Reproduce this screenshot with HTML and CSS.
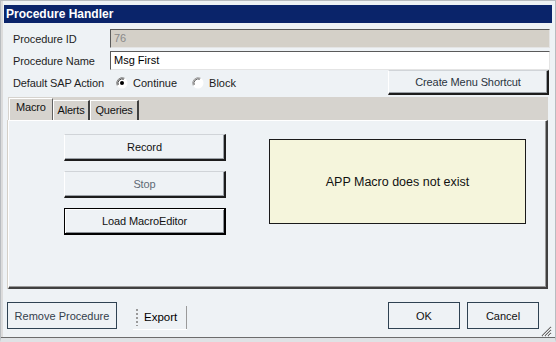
FILE: index.html
```html
<!DOCTYPE html>
<html>
<head>
<meta charset="utf-8">
<link rel="stylesheet" href="styles.css">
</head>
<body>
<div class="window">
  <div class="titlebar">Procedure Handler</div>
  <div class="form">
    <span class="lbl">Procedure ID</span>
    <div class="input disabled">76</div>
    <span class="lbl">Procedure Name</span>
    <div class="input">Msg First</div>
  </div>
  <div class="action-row">
    <span class="lbl action-lbl">Default SAP Action</span>
    <span class="radio-item">
      <svg class="radio" width="12" height="12" viewBox="0 0 12 12"><circle cx="6" cy="6" r="5.5" fill="#fff"/><path d="M1.2 8.5 A5.5 5.5 0 0 1 8.5 1.2" fill="none" stroke="#7a7a7a" stroke-width="1"/><path d="M2.2 7.8 A4.3 4.3 0 0 1 7.8 2.2" fill="none" stroke="#303030" stroke-width="1"/><circle cx="6" cy="6" r="2" fill="#000"/></svg>
      <span>Continue</span>
    </span>
    <span class="radio-item">
      <svg class="radio" width="12" height="12" viewBox="0 0 12 12"><circle cx="6" cy="6" r="5.5" fill="#fff"/><path d="M1.2 8.5 A5.5 5.5 0 0 1 8.5 1.2" fill="none" stroke="#9a9a9a" stroke-width="1"/><path d="M2.2 7.8 A4.3 4.3 0 0 1 7.8 2.2" fill="none" stroke="#505050" stroke-width="1"/></svg>
      <span>Block</span>
    </span>
    <button class="btn3d shortcut">Create Menu Shortcut</button>
  </div>
  <div class="tabs">
    <div class="tabstrip">
      <div class="tab active">Macro</div>
      <div class="tab">Alerts</div>
      <div class="tab">Queries</div>
    </div>
    <div class="tabpanel">
      <div class="btncol">
        <button class="btn3d">Record</button>
        <button class="btn3d disabled">Stop</button>
        <button class="btn3d default">Load MacroEditor</button>
      </div>
      <div class="notice">APP Macro does not exist</div>
    </div>
  </div>
  <div class="footer">
    <button class="flat remove">Remove Procedure</button>
    <div class="toolbar"><span class="grip"></span><span class="export">Export</span></div>
    <span class="spacer"></span>
    <button class="flat ok">OK</button>
    <button class="flat cancel">Cancel</button>
  </div>
  <svg class="sizegrip" width="11" height="11" viewBox="0 0 11 11">
    <path d="M10 1 L1 10 M10 4 L4 10 M10 7 L7 10" stroke="#6a6a6a" stroke-width="1.2"/>
    <path d="M10 2 L2 10 M10 5 L5 10 M10 8 L8 10" stroke="#ffffff" stroke-width="0.8"/>
  </svg>
</div>
</body>
</html>
```
FILE: styles.css
```css
* { box-sizing: border-box; }
html, body { margin: 0; padding: 0; background: #eef2f5; }
body {
  font-family: "Liberation Sans", Arial, sans-serif;
  font-size: 11px;
  color: #1a1a1a;
}
.window {
  position: relative;
  width: 556px;
  height: 342px;
  background: #eef2f5;
  border: 1px solid #b8bcc0;
  border-bottom: 4px solid #dfe2e5;
  box-shadow: inset 0 -1px #6c6c6c, inset 2px 0 #dcdcdc;
  display: flex;
  flex-direction: column;
}
.titlebar {
  margin: 4px 3px 0 3px;
  height: 18px;
  background: #0a246a;
  color: #fff;
  font-weight: bold;
  font-size: 12px;
  line-height: 18px;
  padding-left: 2px;
}
.form {
  margin-top: 6px;
  padding: 0 5px 0 12px;
  display: grid;
  grid-template-columns: 97px 1fr;
  row-gap: 3px;
  align-items: center;
}
.lbl { color: #1e1e1e; letter-spacing: -0.1px; }
.input {
  height: 19px;
  line-height: 17px;
  padding-left: 3px;
  background: #fff;
  border-top: 1px solid #5a5a5a;
  border-left: 1px solid #5a5a5a;
  border-right: 1px solid #e4e4e4;
  border-bottom: 1px solid #e4e4e4;
  color: #000;
  font-size: 11px;
}
.input.disabled { background: #d4d0c8; color: #8a8a8a; }
.action-row {
  height: 25px;
  padding: 0 6px 0 12px;
  display: flex;
  align-items: center;
}
.action-lbl { width: 103px; }
.radio-item {
  display: flex;
  align-items: center;
  gap: 5px;
  margin-right: 15px;
}
.radio { display: block; }
button {
  font-family: "Liberation Sans", Arial, sans-serif;
  font-size: 11px;
  color: #111;
  background: #eef2f5;
  padding: 0;
  margin: 0;
  cursor: default;
}
.btn3d {
  border-top: 1px solid #d0d4d8;
  border-left: 1px solid #ffffff;
  border-right: 2px solid #1c1c1c;
  border-bottom: 2px solid #1c1c1c;
  box-shadow: inset -1px -1px #9aa0a6;
  letter-spacing: -0.1px;
}
.shortcut {
  margin-left: auto;
  width: 161px;
  height: 25px;
  color: #2a3440;
}
.tabs {
  margin: 2px 7px 0 7px;
  display: flex;
  flex-direction: column;
}
.tabstrip {
  height: 23px;
  background: #d6d3ce;
  display: flex;
  align-items: flex-end;
  padding-left: 1px;
}
.tab {
  height: 20px;
  line-height: 19px;
  padding: 0 4px 0 4px;
  border-left: 1px solid #ffffff;
  border-top: 1px solid #ffffff;
  border-right: 2px solid #404040;
  color: #111;
  font-size: 11px;
  letter-spacing: -0.2px;
}
.tab.active {
  height: 22px;
  line-height: 17px;
  padding: 0 6px 0 6px;
  border-right: 1px solid #606060;
}
.tabpanel {
  height: 169px;
  background: #eef2f5;
  border-top: 1px solid #ffffff;
  border-left: 1px solid #ffffff;
  border-right: 2px solid #404040;
  border-bottom: 2px solid #404040;
  box-shadow: inset -1px -1px #9a9a9a, -1px 0 #d4d0c8;
  display: flex;
  align-items: flex-start;
  padding: 13px 20px 0 55px;
  gap: 43px;
}
.btncol {
  display: flex;
  flex-direction: column;
  gap: 10px;
}
.btncol button {
  width: 162px;
  height: 27px;
  font-size: 11px;
}
.btn3d.disabled { color: #5e6a76; }
.btn3d.default {
  border: 1px solid #000;
  border-right: 2px solid #000;
  border-bottom: 2px solid #000;
  box-shadow: inset 1px 1px #ffffff, inset -1px -1px #8a9096;
}
.notice {
  margin-top: 5px;
  width: 257px;
  height: 85px;
  background: #f5f5dc;
  border: 1px solid #1a1a1a;
  display: flex;
  align-items: center;
  justify-content: center;
  font-size: 12.5px;
  color: #111;
}
.footer {
  margin-top: 13px;
  padding: 0 16px 0 6px;
  display: flex;
  align-items: center;
}
.flat {
  height: 27px;
  border: 1px solid #2f4252;
  background: #eef2f5;
  font-size: 11px;
}
.remove { width: 110px; color: #34404c; }
.toolbar {
  margin-left: 16px;
  height: 23px;
  display: flex;
  align-items: center;
  border-right: 1px solid #9a9a9a;
  box-shadow: 0 1px #ffffff;
  padding-right: 9px;
  margin-top: 3px;
}
.grip {
  width: 2px;
  height: 17px;
  margin: 0 6px 0 3px;
  background: repeating-linear-gradient(to bottom, #9a9a9a 0 2px, transparent 2px 4px);
}
.export { font-size: 11.5px; color: #000; }
.spacer { flex: 1; }
.ok { width: 72px; color: #111; }
.cancel { width: 72px; margin-left: 7px; color: #111; }
.sizegrip {
  position: absolute;
  right: 3px;
  bottom: 1px;
}
```
